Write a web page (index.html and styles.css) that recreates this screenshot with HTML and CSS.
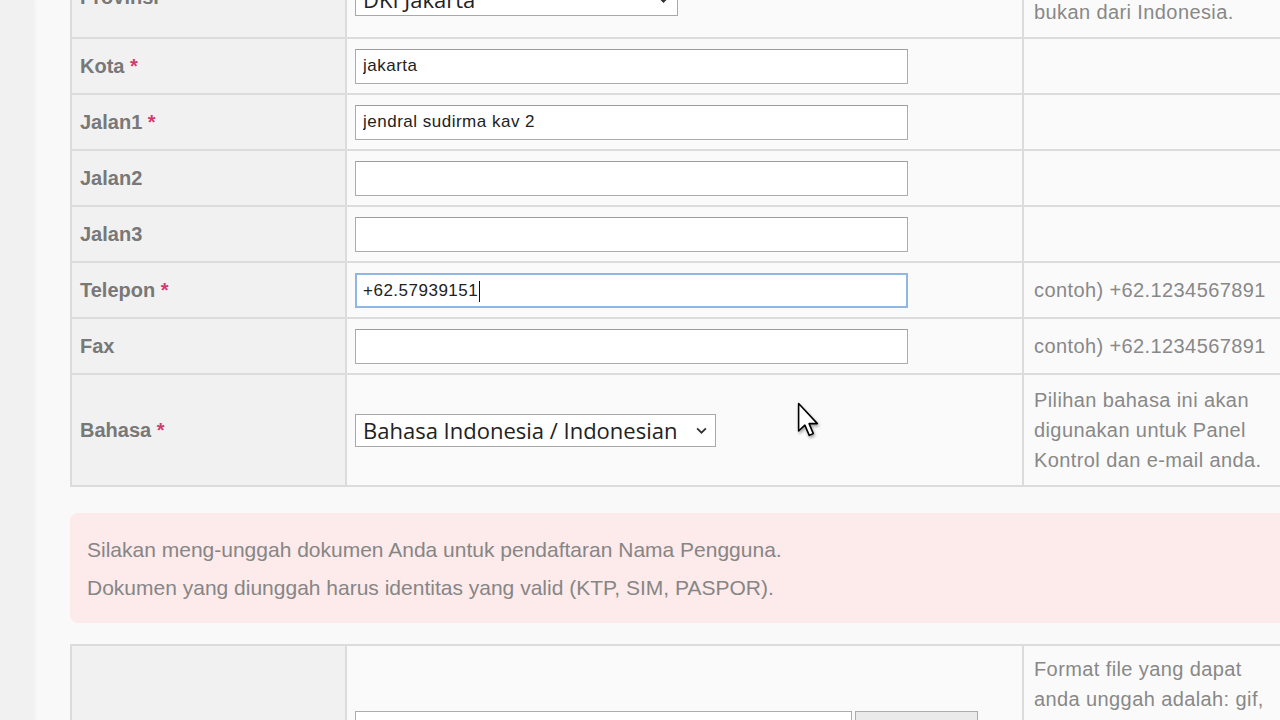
FILE: index.html
```html
<!DOCTYPE html>
<html lang="id">
<head>
<meta charset="utf-8">
<title>Pendaftaran</title>
<link rel="stylesheet" href="styles.css">
</head>
<body>
<div class="page">
  <aside class="rail"></aside>
  <main class="content">
    <table class="form">
      <colgroup><col class="c-label"><col class="c-field"><col class="c-hint"></colgroup>
      <tr class="row-tall">
        <th>Provinsi</th>
        <td>
          <div class="select-wrap sel-prov">
            <select class="sel"><option>DKI Jakarta</option></select>
            <svg class="chev" viewBox="0 0 10 6" width="11" height="7"><path d="M1 1 L5 5 L9 1" fill="none" stroke="#333" stroke-width="1.6"/></svg>
          </div>
        </td>
        <td class="hint">Pilih "Lainnya" jika Anda bukan dari Indonesia.</td>
      </tr>
      <tr>
        <th>Kota <span class="req">*</span></th>
        <td><input class="txt" type="text" value="jakarta"></td>
        <td class="hint"></td>
      </tr>
      <tr>
        <th>Jalan1 <span class="req">*</span></th>
        <td><input class="txt" type="text" value="jendral sudirma kav 2"></td>
        <td class="hint"></td>
      </tr>
      <tr>
        <th>Jalan2</th>
        <td><input class="txt" type="text" value=""></td>
        <td class="hint"></td>
      </tr>
      <tr>
        <th>Jalan3</th>
        <td><input class="txt" type="text" value=""></td>
        <td class="hint"></td>
      </tr>
      <tr>
        <th>Telepon <span class="req">*</span></th>
        <td><div class="txt focus">+62.57939151<span class="caret"></span></div></td>
        <td class="hint">contoh) +62.1234567891</td>
      </tr>
      <tr>
        <th>Fax</th>
        <td><input class="txt" type="text" value=""></td>
        <td class="hint">contoh) +62.1234567891</td>
      </tr>
      <tr class="row-lang">
        <th>Bahasa <span class="req">*</span></th>
        <td>
          <div class="select-wrap sel-lang">
            <select class="sel"><option>Bahasa Indonesia / Indonesian</option></select>
            <svg class="chev" viewBox="0 0 10 6" width="11" height="7"><path d="M1 1 L5 5 L9 1" fill="none" stroke="#333" stroke-width="1.6"/></svg>
          </div>
        </td>
        <td class="hint">Pilihan bahasa ini akan digunakan untuk Panel Kontrol dan e-mail anda.</td>
      </tr>
    </table>

    <div class="notice">
      <p>Silakan meng-unggah dokumen Anda untuk pendaftaran Nama Pengguna.</p>
      <p>Dokumen yang diunggah harus identitas yang valid (KTP, SIM, PASPOR).</p>
    </div>

    <table class="form upload">
      <colgroup><col class="c-label"><col class="c-field"><col class="c-hint"></colgroup>
      <tr>
        <th></th>
        <td class="file-cell">
          <div class="file-row">
            <div class="file-name"></div>
            <div class="file-btn" aria-label="Browse"></div>
          </div>
        </td>
        <td class="hint">Format file yang dapat anda unggah adalah: gif, jpg, png, pdf. Ukuran maksimal 2MB.</td>
      </tr>
    </table>
  </main>
  <svg class="cursor" viewBox="0 0 14 23" width="22" height="36">
    <path d="M1 1 L1 18.5 L5 14.8 L7.8 21.3 L10.4 20.2 L7.7 13.8 L13 13.8 Z" fill="#fff" stroke="#000" stroke-width="1" stroke-linejoin="round"/>
  </svg>
</div>
</body>
</html>
```

FILE: styles.css
```css
html, body {
  margin: 0;
  padding: 0;
  height: 100%;
  overflow: hidden;
}
body {
  background: #f9f9f9;
  font-family: "Liberation Sans", Arial, sans-serif;
}
.page {
  position: relative;
  display: flex;
  min-height: 100%;
}
.rail {
  width: 34px;
  flex: none;
  background: #f1f1f1;
  box-shadow: 1px 0 4px rgba(0,0,0,0.04);
}
.content {
  flex: none;
  width: 1230px;
  padding-left: 36px;
  margin-top: -45px;
}
.form {
  width: 1230px;
  table-layout: fixed;
  border-collapse: collapse;
  border-left: 2px solid #dcdcdc;
}
.c-label { width: 275px; }
.c-field { width: 677px; }
.form tr { height: 56px; }
.form th, .form td {
  border-bottom: 2px solid #dcdcdc;
  border-right: 2px solid #dcdcdc;
  padding: 0;
  vertical-align: middle;
}
.form tr:first-child th, .form tr:first-child td { border-top: 2px solid #dcdcdc; }
.form th {
  background: #f1f1f1;
  text-align: left;
  padding-left: 8px;
  font-size: 20px;
  font-weight: bold;
  color: #787878;
}
.form td {
  background: #fafafa;
  padding-left: 8px;
}
.req { color: #cc3d6e; }
.form td.hint {
  padding: 9px 8px 9px 10px;
  font-size: 20px;
  line-height: 30px;
  color: #888;
  letter-spacing: 0.4px;
}
.form tr.row-tall { height: 82px; }
.form tr.row-lang { height: 112px; }

.txt {
  box-sizing: border-box;
  display: block;
  width: 553px;
  height: 35px;
  margin: 0;
  padding: 0 7px;
  border: 1px solid #acacac;
  border-top-color: #9c9c9c;
  background: #fff;
  font-family: "Liberation Sans", Arial, sans-serif;
  font-size: 17px;
  letter-spacing: 0.5px;
  color: #222;
  outline: none;
  line-height: 33px;
}
.txt.focus {
  border: 2px solid #8fb6e6;
  padding: 0 6px;
  line-height: 31px;
}
.caret {
  display: inline-block;
  width: 1px;
  height: 21px;
  background: #111;
  vertical-align: middle;
  margin-left: 1px;
}
.select-wrap {
  position: relative;
  display: inline-block;
  vertical-align: middle;
}
.sel {
  -webkit-appearance: none;
  appearance: none;
  box-sizing: border-box;
  height: 33px;
  margin: 0;
  padding: 0 30px 0 7px;
  border: 1px solid #a8a8a8;
  border-radius: 0;
  background: #fff;
  font-family: "Open Sans", "Noto Sans", sans-serif;
  font-size: 22px;
  color: #222;
}
.sel-lang .sel { width: 361px; }
.sel-prov .sel { width: 323px; }
.sel-prov { margin-top: 4px; }
.chev {
  position: absolute;
  right: 9px;
  top: 13px;
}
.notice {
  margin: 26px 0 21px;
  padding: 18px 17px 16px;
  background: #fdeaea;
  border-radius: 8px;
  color: #868686;
  font-size: 21px;
  line-height: 38px;
}
.notice p { margin: 0; }
.form.upload tr { height: 200px; }
.upload th, .upload td { vertical-align: top; }
.form.upload td.hint { padding-top: 8px; }
.upload td.file-cell { padding-top: 65px; }
.file-row { display: flex; gap: 3px; }
.file-name {
  width: 497px;
  height: 35px;
  border: 1px solid #acacac;
  background: #fff;
  box-sizing: border-box;
}
.file-btn {
  width: 123px;
  height: 35px;
  box-sizing: border-box;
  border: 1px solid #acacac;
  background: #eaeaea;
}
.cursor {
  position: absolute;
  left: 797px;
  top: 402px;
  filter: drop-shadow(1px 2px 1.5px rgba(0,0,0,0.35));
}
```
